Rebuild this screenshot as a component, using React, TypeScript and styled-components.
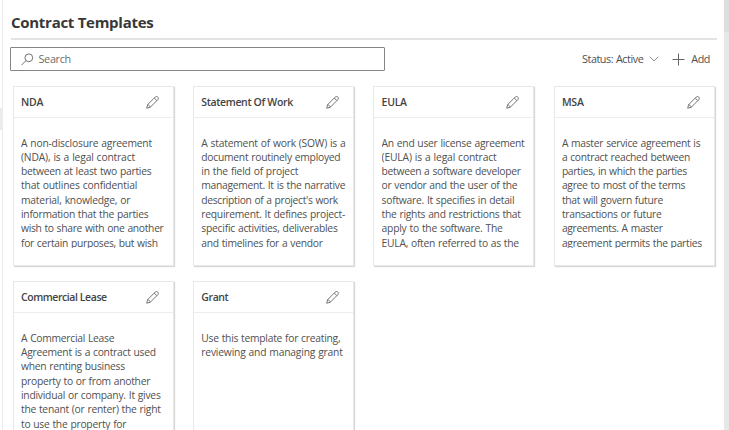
import React from 'react';
import styled, { createGlobalStyle } from 'styled-components';

const GlobalStyle = createGlobalStyle`
  * { box-sizing: border-box; }
  html, body { margin: 0; padding: 0; overflow: hidden; background: #fff; }
  body { font-family: "Open Sans", "Noto Sans", sans-serif; color: #3b3a39; }
`;

const Shell = styled.div`
  display: grid;
  grid-template-columns: 3px 721px 5px;
  width: 729px;
  height: 430px;
  overflow: hidden;
`;

const NavEdge = styled.div`
  border-right: 1px solid #ececec;
  padding-top: 108px;
`;

const NavMarker = styled.div`
  width: 2px;
  height: 22px;
  background: #ebebeb;
`;

const ScrollTrack = styled.div`
  background: #e7e7e7;
`;

const ScrollThumb = styled.div`
  height: 32px;
  background: #dedede;
`;

const Main = styled.main`
  min-width: 0;
  padding: 0 7px 0 8px;
`;

const Title = styled.h1`
  margin: 0;
  height: 40px;
  padding-top: 11px;
  font-size: 15px;
  line-height: 22px;
  font-weight: 700;
  letter-spacing: -0.28px;
  color: #383838;
  border-bottom: 2px solid #e3e3e3;
`;

const Toolbar = styled.div`
  display: flex;
  align-items: center;
  height: 24px;
  margin-top: 7px;
  font-size: 10.8px;
  color: #505050;
`;

const SearchBox = styled.div`
  display: flex;
  align-items: center;
  gap: 5px;
  width: 375px;
  height: 24px;
  margin-left: -1px;
  padding-left: 9.5px;
  border: 1px solid #858585;
  border-radius: 1px;
  color: #6c6c6c;
  letter-spacing: -0.3px;
`;

const Actions = styled.div`
  display: flex;
  align-items: center;
  margin-left: auto;
  padding-right: 7px;
  letter-spacing: -0.45px;
  word-spacing: 0.5px;
  white-space: nowrap;
`;

const Label = styled.span`
  line-height: 16px;
  padding-bottom: 1px;
`;

const Action = styled.div<{ $gap: number; $after?: number }>`
  display: flex;
  align-items: center;
  gap: ${p => p.$gap}px;
  margin-right: ${p => p.$after ?? 0}px;
`;

const Cards = styled.div`
  display: grid;
  grid-template-columns: repeat(4, 161px);
  column-gap: 19.3px;
  row-gap: 15px;
  margin: 15px 0 0 1.7px;
`;

const Card = styled.article`
  height: 180.4px;
  border: 1px solid #e8e8e8;
  box-shadow: 1px 1px 1px #d8d8d8;
  background: #fff;
`;

const CardHeader = styled.header`
  display: flex;
  align-items: center;
  justify-content: space-between;
  height: 31px;
  padding: 0 14px 0 7.3px;
  border-bottom: 1px solid #ededed;
`;

const CardTitle = styled.h2<{ $track: number }>`
  margin: 0;
  font-size: 10.5px;
  line-height: 16px;
  font-weight: 600;
  letter-spacing: ${p => p.$track}px;
  color: #444;
`;

const Description = styled.div`
  height: 112.5px;
  margin: 17.5px 0 0 7.3px;
  overflow: hidden;
  font-size: 10.3px;
  line-height: 14.3px;
  word-spacing: 0.5px;
  color: #505050;
`;

const Line = styled.div<{ $track: number }>`
  white-space: pre;
  letter-spacing: ${p => p.$track}px;
`;

const SearchIcon = () => (
  <svg width="13" height="13" viewBox="0 0 13 13" fill="none" stroke="#737373" strokeWidth="1">
    <circle cx="7.8" cy="4.8" r="3.9" />
    <path d="M5 7.6 0.6 12" />
  </svg>
);

const ChevronIcon = () => (
  <svg width="10" height="6" viewBox="0 0 10 6" fill="none" stroke="#858585" strokeWidth="0.9">
    <path d="M0.8 0.8 5 5 9.2 0.8" />
  </svg>
);

const PlusIcon = () => (
  <svg width="13" height="13" viewBox="0 0 13 13" fill="none" stroke="#666" strokeWidth="1">
    <path d="M6.5 0.5v12M0.5 6.5h12" />
  </svg>
);

const PencilIcon = () => (
  <svg width="13" height="13" viewBox="0 0 13 13" fill="none" stroke="#666" strokeWidth="0.9" strokeLinejoin="round">
    <path d="M0.7 12.2 1.6 8.7 9.2 1.1C10 .3 11 .3 11.8 1.1S12.5 2.9 11.8 3.7L4.2 11.3Z" />
    <path d="M8.3 2.1 10.8 4.6M1.6 8.7C2.8 8.8 4 9.9 4.2 11.3" />
  </svg>
);

type Template = { title: string; track: number; lines: [string, number][] };

const templates: Template[] = [
  { title: 'NDA', track: -0.2, lines: [
    ['A non-disclosure agreement', -0.2], ['(NDA), is a legal contract', -0.17],
    ['between at least two parties', -0.25], ['that outlines confidential', -0.17],
    ['material, knowledge, or', -0.2], ['information that the parties', -0.26],
    ['wish to share with one another', -0.3], ['for certain purposes, but wish', -0.29] ] },
  { title: 'Statement Of Work', track: -0.35, lines: [
    ['A statement of work (SOW) is a', -0.21], ['document routinely employed', -0.25],
    ['in the field of project', -0.2], ['management. It is the narrative', -0.28],
    ["description of a project's work", -0.32], ['requirement. It defines project-', -0.24],
    ['specific activities, deliverables', -0.23], ['and timelines for a vendor', -0.27] ] },
  { title: 'EULA', track: -0.3, lines: [
    ['An end user license agreement', -0.26], ['(EULA) is a legal contract', -0.16],
    ['between a software developer', -0.28], ['or vendor and the user of the', -0.29],
    ['software. It specifies in detail', -0.25], ['the rights and restrictions that', -0.26],
    ['apply to the software. The', -0.22], ['EULA, often referred to as the', -0.26] ] },
  { title: 'MSA', track: -0.2, lines: [
    ['A master service agreement is', -0.27], ['a contract reached between', -0.28],
    ['parties, in which the parties', -0.33], ['agree to most of the terms', -0.28],
    ['that will govern future', -0.29], ['transactions or future', -0.28],
    ['agreements. A master', -0.29], ['agreement permits the parties', -0.27] ] },
  { title: 'Commercial Lease', track: -0.43, lines: [
    ['A Commercial Lease', -0.27], ['Agreement is a contract used', -0.26],
    ['when renting business', -0.26], ['property to or from another', -0.27],
    ['individual or company. It gives', -0.24], ['the tenant (or renter) the right', -0.25],
    ['to use the property for', -0.25] ] },
  { title: 'Grant', track: -0.4, lines: [
    ['Use this template for creating,', -0.25], ['reviewing and managing grant', -0.19] ] },
];

export default function App() {
  return (
    <>
      <GlobalStyle />
      <Shell>
        <NavEdge><NavMarker /></NavEdge>
        <Main>
          <Title>Contract Templates</Title>
          <Toolbar>
            <SearchBox><SearchIcon /><Label>Search</Label></SearchBox>
            <Actions>
              <Action $gap={6} $after={13}><Label>Status: Active</Label><ChevronIcon /></Action>
              <Action $gap={6}><PlusIcon /><Label>Add</Label></Action>
            </Actions>
          </Toolbar>
          <Cards>
            {templates.map(t => (
              <Card key={t.title}>
                <CardHeader>
                  <CardTitle $track={t.track}>{t.title}</CardTitle>
                  <PencilIcon />
                </CardHeader>
                <Description>
                  {t.lines.map(([text, track]) => <Line key={text} $track={track}>{text}</Line>)}
                </Description>
              </Card>
            ))}
          </Cards>
        </Main>
        <ScrollTrack><ScrollThumb /></ScrollTrack>
      </Shell>
    </>
  );
}
